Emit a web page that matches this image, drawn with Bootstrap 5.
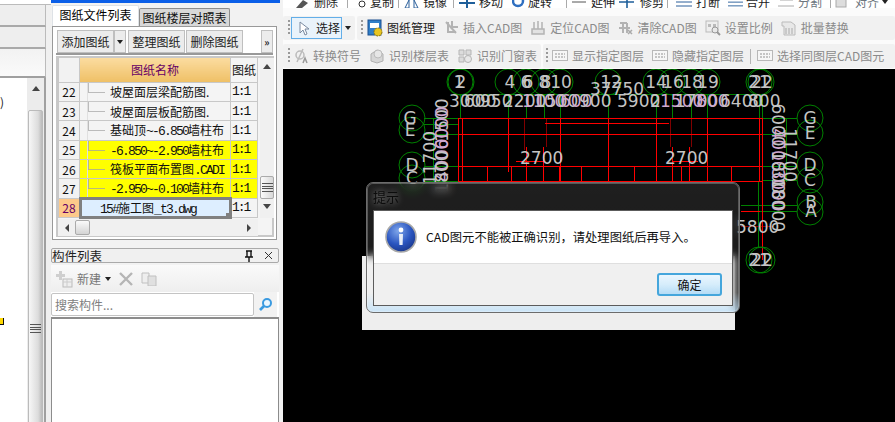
<!DOCTYPE html>
<html lang="zh-CN">

<head>
    <meta charset="UTF-8">
    <meta name="viewport" content="width=device-width, initial-scale=1.0">
    <title>图纸管理</title>
    <link href="https://cdn.jsdelivr.net/npm/bootstrap@5.3.0/dist/css/bootstrap.min.css" rel="stylesheet">
    <style>
        html, body { height: 422px; overflow: hidden; }
        body { font-family: "Noto Sans CJK SC", sans-serif; font-size: 12px; background: #f4f4f4; color: #222; line-height: 16px; }
        .app-shell { width: 895px; height: 422px; }

        /* left strip */
        .left-strip { width: 51px; flex: none; background: #f0f0f0; }
        .strip-band { width: 46px; height: 22px; background: #eee; border-bottom: 2px solid #a9a9a9; border-right: 1px solid #bbb; }
        .strip-top { height: 5px; background: #fff; border-bottom: 1px solid #bbb; }
        .strip-soft { height: 29px; background: linear-gradient(#f2f2f2, #fafafa); border-bottom: 2px solid #a0a0a0; }
        .strip-body { width: 46px; height: 344px; background: #fff; border-right: 2px solid #a0a0a0; }
        .strip-paper { width: 27px; position: relative; }
        .strip-mark { position: absolute; left: 0; top: 16px; font-size: 12px; }
        .strip-warn { position: absolute; left: 0; top: 240px; width: 4px; height: 7px; background: #ffd800; border-right: 1px solid #111; border-bottom: 1px solid #111; }
        .strip-bar { width: 17px; background: #ececec; padding-top: 8px; }
        .strip-thumb { height: 320px; width: 15px; margin-top: 19px; padding-top: 213px; background: linear-gradient(90deg, #f7f7f7, #dcdcdc 70%, #bbb); border: 1px solid #bbb; border-radius: 2px; }
        .arrow-up { width: 0; height: 0; border: 4px solid transparent; border-top: 0; border-bottom: 5px solid #444; }
        .arrow-down { width: 0; height: 0; border: 4px solid transparent; border-bottom: 0; border-top: 5px solid #444; }
        .arrow-left { width: 0; height: 0; border: 4px solid transparent; border-left: 0; border-right: 4px solid #444; }
        .arrow-right { width: 0; height: 0; border: 4px solid transparent; border-right: 0; border-left: 4px solid #444; }
        .grip-lines { width: 11px; height: 9px; border-top: 1px solid #555; border-bottom: 1px solid #555; position: relative; }
        .grip-lines::after { content: ""; position: absolute; left: 0; right: 0; top: 2px; height: 3px; border-top: 1px solid #555; border-bottom: 1px solid #555; }

        /* file panel */
        .mid-col { width: 232px; flex: none; background: #f2f2f2; }
        .title-strip { height: 3px; width: 229px; background: #0b5fe8; }
        .file-tabs { height: 23px; padding-top: 2px; border: 0; padding-left: 1px; }
        .file-tabs .nav-link { color: #111; font-size: 12px; line-height: 18px; padding: 0; border-radius: 2px 2px 0 0; border: 1px solid #8d8d8d; border-bottom: 0; background: #fff; height: 21px; margin: 0; width: 87px; text-align: center; white-space: nowrap; }
        .file-tabs .nav-link.tab-off { background: #d8d8d8; height: 18px; margin-top: 3px; width: 91px; line-height: 17px; }
        .file-box { width: 225px; height: 214px; margin-left: 1px; border: 1px solid #999; background: #fff; padding: 3px; }
        .file-tools { height: 25px; gap: 1px; padding-left: 1px; border-bottom: 2px solid #999; }
        .tool-cell { height: 23px; font-size: 12px; line-height: 21px; color: #222; background: #ececec; border: 1px solid #bfbfbf; border-radius: 0; padding: 0; white-space: nowrap; }
        .tool-wide { width: 57px; }
        .tool-caret { width: 12px; margin-left: -1px; margin-right: 1px; }
        .tool-more { width: 12px; margin-left: auto; font-size: 10px; line-height: 14px; font-weight: 700; }
        .caret-small { width: 0; height: 0; border: 3px solid transparent; border-bottom: 0; border-top: 4px solid #222; }
        .grid-box { width: 218px; height: 181px; margin-top: 1px; border: 2px solid #c8c8c8; background: #f4f4f4; }
        .grid-main { height: 160px; }
        .sheet-table { table-layout: fixed; width: 199px; margin: 0; border-collapse: collapse; font-size: 12px; --bs-table-bg: transparent; }
        .sheet-table td, .sheet-table th { height: 19px; padding: 0; border: 1px solid #c8c8c8; white-space: nowrap; overflow: hidden; line-height: 15px; vertical-align: middle; font-weight: 400; color: #111; box-shadow: none; }
        .sheet-table th { height: 24px; border-top: 0; }
        .col-num { width: 21px; text-align: center; background: #f2f2f2 !important; font-size: 12px; }
        .col-name { width: 151px; }
        .col-rate { width: 27px; padding-left: 1px !important; background: #fff; }
        .rate-cell { font-family: "Liberation Mono", monospace; font-size: 13px; letter-spacing: -2px; }
        .head-name { background: linear-gradient(#fbdca0, #efc066) !important; color: #660066 !important; text-align: center; }
        .tree-cell { position: relative; padding-left: 30px !important; background: #fff; }
        .tree-cell::before { content: ""; position: absolute; left: 8px; top: 0; width: 17px; height: 10px; border-left: 1px solid #bbb; border-bottom: 1px solid #bbb; }
        .tree-cell::after { content: ""; position: absolute; left: 7px; top: 0; bottom: 0; border-left: 1px solid #e0e0e0; }
        .row-hot { background: #ff0 !important; }
        .tree-cell.row-hot::before { border-color: #b9b97a; }
        .num-current { background: #fdc98a !important; color: #660066 !important; }
        .cell-current { position: relative; background: #ddeeff !important; padding-left: 20px !important; outline: 3px solid #808080; outline-offset: -2px; }
        .cell-current::after { content: ""; position: absolute; right: 0; bottom: 0; width: 4px; height: 4px; background: #808080; }
        .mono-run { font-family: "Liberation Mono", monospace; font-size: 13px; letter-spacing: -1.8px; line-height: 1; }
        .v-scroll { width: 15px; margin-left: 2px; background: #f0f0f0; padding: 6px 0; }
        .v-thumb { width: 14px; height: 23px; margin: 107px 0 5px; background: linear-gradient(90deg, #fafafa, #d8d8d8); border: 1px solid #aaa; border-radius: 2px; }
        .h-scroll { height: 17px; width: 200px; margin-top: 1px; padding: 0 7px; background: #f0f0f0; }
        .h-thumb { width: 15px; height: 15px; margin-left: 6px; background: linear-gradient(#fafafa, #d4d4d4); border: 1px solid #aaa; border-radius: 2px; }

        /* component panel */
        .part-head { height: 15px; width: 228px; margin-top: 8px; font-size: 12.5px; line-height: 13px; border: 1px solid #aaa; border-radius: 2px; background: #f0f0f0; color: #222; }
        .part-tools { height: 27px; margin-top: 2px; width: 228px; padding-left: 4px; background: linear-gradient(#fafafa, #eee); color: #777; }
        .part-search { width: 228px; height: 25px; background: #fff; }
        .part-search .form-control { width: 203px; flex: none; height: 23px; padding: 0 3px; font-size: 12px; border: 1px solid #c4c4c4; border-radius: 2px; font-family: inherit; }
        .part-search .form-control::placeholder { color: #808080; opacity: 1; }
        .search-tile { width: 23px; background: #f2f2f2; }
        .part-list { width: 228px; flex: 1; background: #fff; border: 1px solid #8c8c8c; border-top-width: 2px; border-bottom: 0; }

        /* ribbon */
        .main-col { flex: 1; min-width: 0; }
        .ribbon { height: 69px; background: #fbfbfb; overflow: hidden; }
        .ribbon-cut { height: 8px; padding-left: 12px; overflow: hidden; background: #fff; color: #222; }
        .cut-item { display: flex; align-items: flex-end; gap: 3px; height: 8px; white-space: nowrap; }
        .cut-text { line-height: 15px; height: 15px; margin-bottom: -1px; }
        .cut-sep { width: 1px; height: 8px; background: #aaa; flex: none; }
        .cut-w52 { width: 52px; }
        .cut-w46 { width: 46px; }
        .cut-w50 { width: 50px; }
        .cut-w54 { width: 54px; }
        .cut-w44 { width: 44px; }
        .cut-w48 { width: 48px; }
        .cut-w42 { width: 42px; }
        .ribbon-row { height: 24px; gap: 2px; }
        .ribbon-band { height: 24px; background: #f1f1f1; border-radius: 2px; padding-left: 5px; gap: 8px; color: #8b8b8b; white-space: nowrap; }
        .band-pick { width: 72px; }
        .band-detect { width: 258px; }
        .band-next { padding-left: 4px; }
        .band-last { padding-left: 3px; }
        .ribbon-item { gap: 4px; }
        .ribbon-item svg { flex: none; }
        .text-dark-item { color: #1b1b1b; }
        .grip-dots { width: 2px; height: 16px; margin-right: -4px; background: repeating-linear-gradient(#999 0 2px, transparent 2px 4px); }
        .pick-btn { height: 22px; width: 51px; margin-left: -3px; padding: 0 3px 0 7px; background: #e9f3fb; border: 1px solid #63aee8; color: #1b1b1b; font-size: 12px; border-radius: 0; gap: 6px; }
        .pick-caret { margin-left: -5px; }
        .band-sep { width: 1px; height: 15px; background: #b5b5b5; margin: 0 -2px; }

        /* drawing area */
        .draw-area { position: relative; height: 353px; background: #000; overflow: hidden; }
        .cad-layer { display: block; position: absolute; left: 0; top: 0; }
        .cad-layer text { font-family: "DejaVu Sans", sans-serif; font-size: 17px; fill: #c4c4c4; }
        .cad-layer .txt-pink { fill: #d0a8d0; }
        .ghost-sheet { position: absolute; left: 79px; top: 187px; width: 373px; height: 74px; background: #eee; }
        .hint-dialog { position: absolute; left: 83px; top: 113px; width: 374px; height: 131px; padding: 0 6px 6px; border: 1px solid #6c6c6c; border-radius: 7px; background: linear-gradient(rgba(255,255,255,.12), rgba(255,255,255,.1) 85%, rgba(190,225,250,.75)); -webkit-backdrop-filter: blur(4px); backdrop-filter: blur(4px); box-shadow: inset 0 0 0 1px rgba(255,255,255,.25); }
        .hint-title { height: 27px; line-height: 27px; font-size: 13px; color: #0c0c0c; text-shadow: 0 0 6px rgba(255,255,255,.55); }
        .hint-box { height: 97px; border: 1px solid #5c5c5c; border-radius: 0; --bs-modal-bg: #fff; }
        .hint-body { height: 53px; background: #fff; padding: 0 0 0 11px; gap: 9px; font-size: 12.3px; color: #111; border-bottom: 1px solid #dfdfdf; flex: none; }
        .hint-foot { flex: 1; background: #f0f0f0; padding: 9px 10px 0 0; align-items: flex-start; }
        .ok-btn { width: 65px; height: 23px; padding: 0; font-size: 12px; line-height: 20px; color: #111; border: 2px solid #45a6dc; border-radius: 3px; background: linear-gradient(#eaf6fe, #d6edfb 50%, #b5dcf6); }
    </style>
</head>

<body>
    <svg width="0" height="0" class="position-absolute">
        <defs>
            <symbol id="ico-stack" viewBox="0 0 16 16"><path d="M2 13V6l6-4 6 4v7l-6 2z" fill="#d6d6d6" stroke="#b0b0b0"/><circle cx="9" cy="6" r="4" fill="#e6e6e6" stroke="#bbb"/></symbol>
            <symbol id="ico-cross" viewBox="0 0 16 16"><path d="M3 2l10 11M5 2v10h8M9 1v6h6" fill="none" stroke="#b3b3b3" stroke-width="2"/></symbol>
            <symbol id="ico-ruler" viewBox="0 0 16 16"><path d="M2 9h12v5H2zM4 2v7M8 1v8M12 2v7" fill="#e2e2e2" stroke="#b3b3b3" stroke-width="1.5"/></symbol>
            <symbol id="ico-erase" viewBox="0 0 16 16"><path d="M3 3h7M6 3v10M10 3v10M2 8h11" fill="none" stroke="#b3b3b3" stroke-width="2"/><path d="M11 10l4 4M15 10l-4 4" stroke="#aaa" stroke-width="1.5"/></symbol>
            <symbol id="ico-scale" viewBox="0 0 16 16"><rect x="1" y="1" width="12" height="11" fill="#eee" stroke="#bbb"/><path d="M3 4h3v3H3zM8 4h3v3H8z" fill="#bbb"/><circle cx="10" cy="10" r="3" fill="#e8e8e8" stroke="#999"/><path d="M12 12l3 3" stroke="#999" stroke-width="2"/></symbol>
            <symbol id="ico-swap" viewBox="0 0 16 16"><path d="M1 2h9l4 3v10H3V6H1z" fill="#e8e8e8" stroke="#bbb"/><path d="M5 8v6M8 8v6M11 8v6" stroke="#aaa"/></symbol>
            <symbol id="ico-cadbox" viewBox="0 0 16 16"><rect x=".5" y="2.500" width="15" height="10" fill="#f6f6f6" stroke="#b8b8b8"/><path d="M3 6h10M3 9h10" stroke="#c4c4c4" stroke-width="2" stroke-dasharray="2 1"/></symbol>
        </defs>
    </svg>

    <div class="app-shell d-flex">
        <!-- left strip, cut off by the screenshot -->
        <div class="left-strip d-flex flex-column">
            <div class="strip-top"></div>
            <div class="strip-band"></div>
            <div class="strip-band"></div>
            <div class="strip-band strip-soft"></div>
            <div class="strip-body d-flex">
                <div class="strip-paper flex-shrink-0">
                    <span class="strip-mark">)</span>
                    <span class="strip-warn"></span>
                </div>
                <div class="strip-bar d-flex flex-column align-items-center">
                    <div class="arrow-up"></div>
                    <div class="strip-thumb d-flex justify-content-center flex-shrink-0"><div class="grip-lines"></div></div>
                </div>
            </div>
        </div>

        <div class="mid-col d-flex flex-column">
            <div class="title-strip"></div>
            <ul class="nav nav-tabs file-tabs">
                <li class="nav-item"><a class="nav-link active" href="#">图纸文件列表</a></li>
                <li class="nav-item"><a class="nav-link tab-off" href="#">图纸楼层对照表</a></li>
            </ul>
            <div class="file-box">
                <div class="file-tools d-flex">
                    <button type="button" class="btn tool-cell tool-wide">添加图纸</button>
                    <button type="button" class="btn tool-cell tool-caret d-flex align-items-center justify-content-center"><span class="caret-small"></span></button>
                    <button type="button" class="btn tool-cell tool-wide">整理图纸</button>
                    <button type="button" class="btn tool-cell tool-wide">删除图纸</button>
                    <button type="button" class="btn tool-cell tool-more">»</button>
                </div>
                <div class="grid-box">
                    <div class="grid-main d-flex">
                        <table class="table sheet-table">
                            <thead>
                                <tr><th class="col-num"></th><th class="col-name head-name">图纸名称</th><th class="col-rate">图纸</th></tr>
                            </thead>
                            <tbody>
                                <tr><td class="col-num">22</td><td class="tree-cell">坡屋面层梁配筋图.</td><td class="col-rate rate-cell">1:1</td></tr>
                                <tr><td class="col-num">23</td><td class="tree-cell">坡屋面层板配筋图.</td><td class="col-rate rate-cell">1:1</td></tr>
                                <tr><td class="col-num">24</td><td class="tree-cell">基础顶<span class="mono-run">~-6.850</span>墙柱布</td><td class="col-rate rate-cell">1:1</td></tr>
                                <tr><td class="col-num">25</td><td class="tree-cell row-hot"><span class="mono-run">-6.850~-2.950</span>墙柱布</td><td class="col-rate rate-cell row-hot">1:1</td></tr>
                                <tr><td class="col-num">26</td><td class="tree-cell row-hot">筏板平面布置图<span class="mono-run">.CADI</span></td><td class="col-rate rate-cell row-hot">1:1</td></tr>
                                <tr><td class="col-num">27</td><td class="tree-cell row-hot"><span class="mono-run">-2.950~-0.100</span>墙柱布</td><td class="col-rate rate-cell row-hot">1:1</td></tr>
                                <tr><td class="col-num num-current">28</td><td class="cell-current"><span class="mono-run">15#</span>施工图<span class="mono-run">_t3.dwg</span></td><td class="col-rate rate-cell">1:1</td></tr>
                            </tbody>
                        </table>
                        <div class="v-scroll d-flex flex-column align-items-center">
                            <div class="arrow-up"></div>
                            <div class="v-thumb d-flex align-items-center justify-content-center flex-shrink-0"><div class="grip-lines"></div></div>
                            <div class="arrow-down"></div>
                        </div>
                    </div>
                    <div class="h-scroll d-flex align-items-center">
                        <div class="arrow-left"></div>
                        <div class="h-thumb"></div>
                        <div class="arrow-right ms-auto"></div>
                    </div>
                </div>
            </div>

            <div class="part-head d-flex align-items-center">
                <span class="flex-grow-1">构件列表</span>
                <svg width="12" height="12" viewBox="0 0 12 12" class="me-2"><path d="M3 1h6M4 1v6M8 1v6M2 7h8M6 7v5" fill="none" stroke="#111" stroke-width="1.400"/></svg>
                <svg width="11" height="11" viewBox="0 0 11 11" class="me-1"><path d="M2 2l7 7M9 2l-7 7" stroke="#333"/></svg>
            </div>
            <div class="part-tools d-flex align-items-center">
                <svg width="18" height="18" viewBox="0 0 18 18"><path d="M4 1h3v3h3v3H7v3H4V7H1V4h3z" fill="#cfcfcf"/><rect x="8" y="9" width="9" height="8" fill="#eee" stroke="#bbb"/><path d="M8 12h9M12 9v8" stroke="#ccc"/></svg>
                <span class="ms-1">新建</span>
                <span class="caret-small ms-1"></span>
                <svg width="14" height="14" viewBox="0 0 14 14" class="ms-2"><path d="M1 1l12 12M13 1L1 13" stroke="#b5b5b5" stroke-width="2.400"/></svg>
                <svg width="16" height="14" viewBox="0 0 16 14" class="ms-2"><path d="M1 1h7v10H1z" fill="#eee" stroke="#c0c0c0"/><path d="M7 4h8v10H7z" fill="#e0e0e0" stroke="#c0c0c0"/></svg>
            </div>
            <div class="part-search d-flex align-items-center">
                <input class="form-control" type="text" placeholder="搜索构件...">
                <div class="search-tile d-flex align-items-center justify-content-center align-self-stretch">
                    <svg width="15" height="15" viewBox="0 0 15 15"><circle cx="9" cy="6" r="4" fill="#eaf6ff" stroke="#3a9ae0" stroke-width="2"/><path d="M6 9l-4 4" stroke="#3a9ae0" stroke-width="2.600"/></svg>
                </div>
            </div>
            <div class="part-list"></div>
        </div>

        <div class="main-col d-flex flex-column">
            <div class="ribbon">
                <div class="ribbon-cut d-flex">
                    <div class="cut-item cut-w52"><svg width="16" height="8" viewBox="0 0 16 8"><path d="M1 8l7-8 5 3-6 5z" fill="#555"/></svg><span class="cut-text">删除</span></div>
                    <div class="cut-sep"></div>
                    <div class="cut-item cut-w46 ms-1"><svg width="15" height="8" viewBox="0 0 15 8"><circle cx="10" cy="4" r="3" fill="none" stroke="#333"/></svg><span class="cut-text">复制</span></div>
                    <div class="cut-sep"></div>
                    <div class="cut-item cut-w50 ms-1"><svg width="17" height="8" viewBox="0 0 17 8"><path d="M2 8l4-8v8zM15 8l-4-8v8z" fill="none" stroke="#2a5f9a"/></svg><span class="cut-text">镜像</span></div>
                    <div class="cut-sep"></div>
                    <div class="cut-item cut-w54 ms-1"><svg width="18" height="8" viewBox="0 0 18 8"><path d="M1 3h16M9 0v8" stroke="#1f5f9a" stroke-width="2"/></svg><span class="cut-text">移动</span></div>
                    <div class="cut-item cut-w54"><svg width="13" height="8" viewBox="0 0 13 8"><circle cx="6" cy="1" r="5" fill="none" stroke="#2f6fc0" stroke-width="2.500"/></svg><span class="cut-text">旋转</span></div>
                    <div class="cut-sep"></div>
                    <div class="cut-item cut-w44 ms-1"><svg width="16" height="8" viewBox="0 0 16 8"><path d="M1 2h14" stroke="#555"/></svg><span class="cut-text ms-auto">延伸</span></div>
                    <div class="cut-item cut-w48 ms-1"><svg width="18" height="8" viewBox="0 0 18 8"><path d="M0 2h15M8 0v8" stroke="#1f5f9a" stroke-width="1.600"/></svg><span class="cut-text">修剪</span></div>
                    <div class="cut-sep"></div>
                    <div class="cut-item cut-w44 ms-2"><svg width="16" height="8" viewBox="0 0 16 8"><path d="M0 6h16M0 2h16" stroke="#2a5f9a"/></svg><span class="cut-text ms-auto">打断</span></div>
                    <div class="cut-item cut-w42 ms-2"><svg width="16" height="8" viewBox="0 0 16 8"><path d="M0 6h16M0 2h16" stroke="#2a5f9a"/></svg><span class="cut-text ms-auto">合并</span></div>
                    <div class="cut-item cut-w44 ms-2"><svg width="16" height="8" viewBox="0 0 16 8"><path d="M0 6h16M2 0h13" stroke="#aaa"/></svg><span class="cut-text ms-auto text-secondary">分割</span></div>
                    <div class="cut-sep ms-2"></div>
                    <div class="cut-item ms-1"><svg width="13" height="8" viewBox="0 0 13 8"><rect x="1" y="-3" width="10" height="10" fill="#ddd" stroke="#aaa"/></svg><span class="cut-text ms-1 text-secondary">对齐</span><span class="caret-small mb-1"></span></div>
                </div>
                <div class="ribbon-row d-flex mt-2">
                    <div class="ribbon-band band-pick d-flex align-items-center">
                        <span class="grip-dots"></span>
                        <button type="button" class="btn pick-btn d-flex align-items-center">
                            <svg width="11" height="15" viewBox="0 0 11 15" class="flex-shrink-0"><path d="M1 1v11l3-3 2 5 2-1-2-5h4z" fill="#fff" stroke="#7a8aa0"/></svg>
                            <span class="text-nowrap">选择</span>
                        </button>
                        <span class="caret-small pick-caret"></span>
                    </div>
                    <div class="ribbon-band band-next d-flex align-items-center flex-grow-1">
                        <span class="grip-dots"></span>
                        <div class="ribbon-item d-flex align-items-center text-dark-item">
                            <svg width="16" height="18" viewBox="0 0 16 18"><rect x="1" y="1" width="13" height="15" fill="#2f7fc8" stroke="#1a4f90"/><rect x="3" y="4" width="9" height="5" fill="#fff"/><circle cx="11" cy="13" r="4" fill="#e8c520" stroke="#8a7410" stroke-dasharray="2 1"/></svg>
                            <span>图纸管理</span>
                        </div>
                        <div class="ribbon-item d-flex align-items-center"><svg width="16" height="16"><use href="#ico-cross"/></svg><span>插入CAD图</span></div>
                        <div class="ribbon-item d-flex align-items-center"><svg width="16" height="16"><use href="#ico-ruler"/></svg><span>定位CAD图</span></div>
                        <div class="ribbon-item d-flex align-items-center"><svg width="16" height="16"><use href="#ico-erase"/></svg><span>清除CAD图</span></div>
                        <div class="ribbon-item d-flex align-items-center"><svg width="16" height="16"><use href="#ico-scale"/></svg><span>设置比例</span></div>
                        <div class="ribbon-item d-flex align-items-center"><svg width="16" height="16"><use href="#ico-swap"/></svg><span>批量替换</span></div>
                    </div>
                </div>
                <div class="ribbon-row d-flex mt-1">
                    <div class="ribbon-band band-detect d-flex align-items-center">
                        <span class="grip-dots"></span>
                        <div class="ribbon-item d-flex align-items-center">
                            <svg width="15" height="16" viewBox="0 0 15 16"><circle cx="6" cy="7" r="4" fill="none" stroke="#bbb" stroke-width="1.500"/><path d="M9 1L3 14" stroke="#bbb" stroke-width="1.500"/><path d="M9 15l2-5 2 5" fill="none" stroke="#999" stroke-width="1.500"/></svg>
                            <span>转换符号</span>
                        </div>
                        <div class="ribbon-item d-flex align-items-center"><svg width="16" height="16"><use href="#ico-stack"/></svg><span>识别楼层表</span></div>
                        <div class="ribbon-item d-flex align-items-center"><svg width="16" height="16" viewBox="0 0 16 16"><path d="M2 2h5v5H2zM9 2h5v5H9zM2 9h5v5H2z" fill="#dcdcdc" stroke="#b5b5b5"/><circle cx="11" cy="11" r="3.500" fill="#e8e8e8" stroke="#b5b5b5"/></svg><span>识别门窗表</span></div>
                    </div>
                    <div class="ribbon-band band-last d-flex align-items-center flex-grow-1">
                        <span class="grip-dots"></span>
                        <div class="ribbon-item d-flex align-items-center"><svg width="16" height="16"><use href="#ico-cadbox"/></svg><span>显示指定图层</span></div>
                        <div class="ribbon-item d-flex align-items-center"><svg width="16" height="16"><use href="#ico-cadbox"/></svg><span>隐藏指定图层</span></div>
                        <span class="band-sep"></span>
                        <div class="ribbon-item d-flex align-items-center"><svg width="16" height="16"><use href="#ico-cadbox"/></svg><span>选择同图层CAD图元</span></div>
                    </div>
                </div>
            </div>

            <div class="draw-area">
                <svg class="cad-layer" width="612" height="353" viewBox="283 69 612 353">
                    <!-- axis lines -->
                    <path fill="none" stroke="#008000" shape-rendering="crispEdges" d="M460 94H761M460 95V118M508 95V118M526 95V118M544 95V118M560 95V118M608 95V118M656 95V118M672 95V118M691 95V118M707 95V118M759 95V118M762 95V118M424 118H458M424 124H458M424 134H458M424 166H458M424 181H458M433 118V182M762 118H797M762 134H797M762 166H797M762 180H797M786 118V182M741 205H797M741 211H797M758 182V248M762 182V248"/>
                    <path fill="none" stroke="#800000" shape-rendering="crispEdges" d="M524 118V150M546 118V147M670 118V147M691 118V147M741 226H773"/>
                    <path fill="none" stroke="#ff0000" shape-rendering="crispEdges" d="M458 118H762M545 123H669M458 134H762M458 166H762M458 181H762M741 211H760M458 118V182M462 118V182M508 118V172M560 118V182M608 118V182M656 118V182M707 118V182M759 118V182M762 118V260M487 166V182M511 166V182M526 147V182M543 147V182M559 166V182M581 166V182M634 166V182M672 147V182M681 166V182M689 147V182M731 166V182M516 161H545M672 161H698"/>
                    <!-- axis bubbles -->
                    <g fill="none" stroke="#008000">
                        <circle cx="460" cy="82" r="13"/><circle cx="461" cy="82" r="13"/><circle cx="508" cy="82" r="13"/><circle cx="526" cy="82" r="13"/><circle cx="544" cy="82" r="13"/><circle cx="560" cy="82" r="13"/><circle cx="608" cy="82" r="13"/><circle cx="656" cy="82" r="13"/><circle cx="672" cy="82" r="13"/><circle cx="691" cy="82" r="13"/><circle cx="707" cy="82" r="13"/><circle cx="759" cy="82" r="13"/><circle cx="761" cy="82" r="13"/>
                        <circle cx="412" cy="118" r="13"/><circle cx="412" cy="130" r="13"/><circle cx="412" cy="165" r="13"/><circle cx="412" cy="178" r="13"/>
                        <circle cx="810" cy="118" r="13"/><circle cx="810" cy="133" r="13"/><circle cx="810" cy="165" r="13"/><circle cx="810" cy="180" r="13"/><circle cx="810" cy="202" r="13"/><circle cx="810" cy="212" r="13"/>
                        <circle cx="759" cy="260" r="13"/><circle cx="762" cy="260" r="13"/>
                    </g>
                    <!-- bubble labels -->
                    <g text-anchor="middle">
                        <text x="459" y="88">1</text><text x="461" y="88">2</text><text x="510" y="88">4</text><text x="526" y="88">6</text><text x="528" y="88">6</text><text x="544" y="88">8</text><text x="546" y="88">8</text><text x="561" y="88">10</text><text x="611" y="88">12</text><text x="656" y="88">14</text><text x="673" y="88">16</text><text x="692" y="88">18</text><text x="708" y="88">19</text><text x="759" y="88">21</text><text x="762" y="88">22</text>
                        <text x="410" y="124">G</text><text x="410" y="136">E</text><text x="412" y="171">D</text><text x="412" y="184">C</text>
                        <text x="810" y="124">G</text><text x="810" y="139">E</text><text x="810" y="171">D</text><text x="810" y="186">C</text><text x="811" y="208">B</text><text x="811" y="217">A</text>
                        <text x="759" y="266">21</text><text x="762" y="266">22</text>
                    </g>
                    <!-- dimensions -->
                    <text x="590" y="95">37750</text>
                    <text x="449" y="107">300</text><text x="464" y="107">600</text><text x="480" y="107">950</text><text x="503" y="107">2200</text><text class="txt-pink" x="522" y="107">1100</text><text x="535" y="107">1500</text><text class="txt-pink" x="560" y="107">600</text><text x="579" y="107">900</text><text x="617" y="107">5900</text><text x="650" y="107">2</text><text class="txt-pink" x="660" y="107">1500</text><text x="675" y="107">1700</text><text class="txt-pink" x="696" y="107">800</text><text x="720" y="107">6400</text><text x="748" y="107">800</text>
                    <text x="520" y="164">2700</text><text x="665" y="164">2700</text>
                    <g text-anchor="middle">
                        <text transform="translate(436 158) rotate(-90)">11700</text>
                        <text transform="translate(448 120) rotate(-90)">1500</text><text class="txt-pink" transform="translate(448 128) rotate(-90)">6000</text>
                        <text class="txt-pink" transform="translate(448 160) rotate(-90)">4000</text><text transform="translate(448 172) rotate(-90)">1800</text>
                        <text transform="translate(784 155) rotate(90)">11700</text>
                        <text transform="translate(772 125) rotate(90)">6000</text><text class="txt-pink" transform="translate(772 150) rotate(90)">4000</text>
                        <text transform="translate(772 172) rotate(90)">1800</text>
                        <text class="txt-pink" transform="translate(772 190) rotate(90)">3000</text><text transform="translate(772 205) rotate(90)">18000</text>
                    </g>
                    <text x="736" y="233">5800</text>
                </svg>

                <div class="ghost-sheet"></div>

                <div class="hint-dialog d-flex flex-column">
                    <div class="hint-title">提示</div>
                    <div class="modal-content hint-box">
                        <div class="modal-body hint-body d-flex align-items-center">
                            <svg width="32" height="32" viewBox="0 0 32 32" class="flex-shrink-0">
                                <defs><radialGradient id="info-blue" cx=".4" cy=".3" r=".8"><stop offset="0" stop-color="#7fa6ea"/><stop offset=".55" stop-color="#2a55c0"/><stop offset="1" stop-color="#16307f"/></radialGradient></defs>
                                <circle cx="16" cy="16" r="15" fill="url(#info-blue)" stroke="#a8a8a8" stroke-width="1.600"/>
                                <circle cx="16" cy="9" r="2.400" fill="#fff"/>
                                <path d="M14 13h4l-.4 11h-3.200z" fill="#e8eef8"/>
                            </svg>
                            <span class="text-nowrap">CAD图元不能被正确识别，请处理图纸后再导入。</span>
                        </div>
                        <div class="modal-footer hint-foot">
                            <button type="button" class="btn ok-btn m-0">确定</button>
                        </div>
                    </div>
                </div>
            </div>
        </div>
    </div>

    <script src="https://cdn.jsdelivr.net/npm/bootstrap@5.3.0/dist/js/bootstrap.bundle.min.js"></script>
</body>

</html>
